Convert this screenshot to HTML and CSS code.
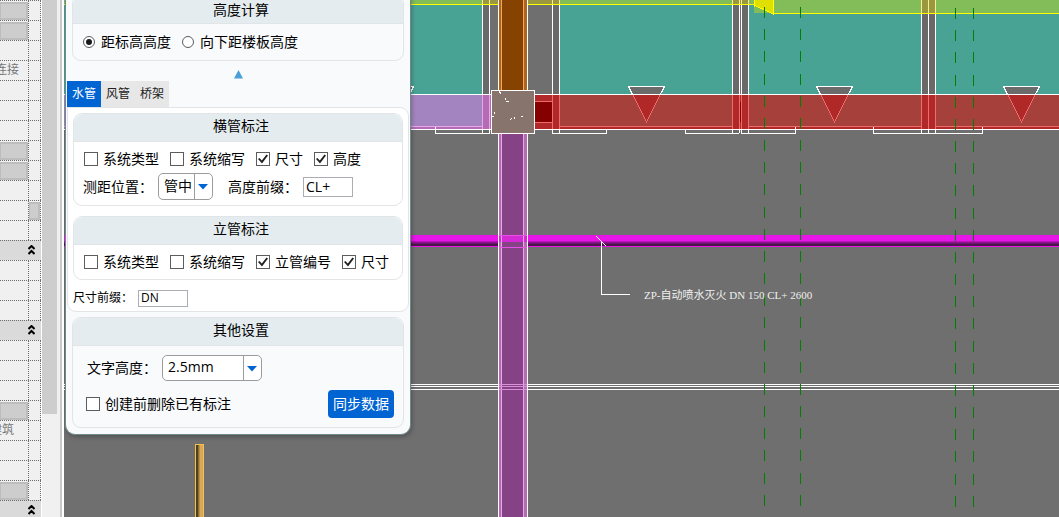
FILE: index.html
```html
<!DOCTYPE html>
<html lang="zh-CN">
<head>
<meta charset="utf-8">
<title>管道标注</title>
<link rel="stylesheet" href="styles.css">
</head>
<body>
<div class="app">
  <aside class="props">
    <div class="props-grid">
      <div class="prop"><div class="prop-value"><button class="prop-btn" type="button" aria-label="编辑"></button></div><div class="prop-link"></div></div>
      <div class="prop"><div class="prop-value"><button class="prop-btn" type="button" aria-label="编辑"></button></div><div class="prop-link"></div></div>
      <div class="prop"><div class="prop-value"></div><div class="prop-link"></div></div>
      <div class="prop"><div class="prop-value"><span class="prop-text">连接</span></div><div class="prop-link"></div></div>
      <div class="prop"><div class="prop-value"></div><div class="prop-link"></div></div>
      <div class="prop"><div class="prop-value"></div><div class="prop-link"></div></div>
      <div class="prop"><div class="prop-value"></div><div class="prop-link"></div></div>
      <div class="prop"><div class="prop-value"><button class="prop-btn" type="button" aria-label="编辑"></button></div><div class="prop-link"></div></div>
      <div class="prop"><div class="prop-value"><button class="prop-btn" type="button" aria-label="编辑"></button></div><div class="prop-link"></div></div>
      <div class="prop"><div class="prop-value"></div><div class="prop-link"></div></div>
      <div class="prop"><div class="prop-value"></div><div class="prop-link"><button class="prop-btn" type="button" aria-label="关联"></button></div></div>
      <div class="prop"><div class="prop-value"></div><div class="prop-link"></div></div>
      <button class="category" type="button" aria-label="折叠"><svg width="7" height="10" viewBox="0 0 7 10"><path d="M.5 4 3.5 1l3 3M.5 9l3-3 3 3"/></svg></button>
      <div class="prop"><div class="prop-value"></div><div class="prop-link"></div></div>
      <div class="prop"><div class="prop-value"></div><div class="prop-link"></div></div>
      <div class="prop"><div class="prop-value"></div><div class="prop-link"></div></div>
      <button class="category" type="button" aria-label="折叠"><svg width="7" height="10" viewBox="0 0 7 10"><path d="M.5 4 3.5 1l3 3M.5 9l3-3 3 3"/></svg></button>
      <div class="prop"><div class="prop-value"></div><div class="prop-link"></div></div>
      <div class="prop"><div class="prop-value"></div><div class="prop-link"></div></div>
      <div class="prop"><div class="prop-value"></div><div class="prop-link"></div></div>
      <div class="prop"><div class="prop-value"><button class="prop-btn" type="button" aria-label="编辑"></button></div><div class="prop-link"></div></div>
      <div class="prop"><div class="prop-value"><span class="prop-text prop-text-inset">建筑</span></div><div class="prop-link"></div></div>
      <div class="prop"><div class="prop-value"></div><div class="prop-link"></div></div>
      <div class="prop"><div class="prop-value"></div><div class="prop-link"></div></div>
      <div class="prop"><div class="prop-value"><button class="prop-btn" type="button" aria-label="编辑"></button></div><div class="prop-link"></div></div>
      <button class="category" type="button" aria-label="折叠"><svg width="7" height="10" viewBox="0 0 7 10"><path d="M.5 4 3.5 1l3 3M.5 9l3-3 3 3"/></svg></button>
    </div>
    <div class="scrollbar"><div class="thumb"></div></div>
    <div class="splitter"></div>
  </aside>

  <main class="workspace">
    <svg class="drawing" role="img" aria-label="管线平面图">
      <g transform="translate(-64 0)" shape-rendering="crispEdges">
        <!-- floor areas -->
        <path fill="#49a395" d="M64 0H482V94H64zM560 0H732V94H560zM749 0H921V94H749zM936 0H3000V94H936z"/>
        <path fill="#696969" d="M483 0H489V133H483zM553 0H559V133H553zM733 0H739V133H733zM742 0H748V133H742zM922 0H935V133H922z"/>
        <!-- top slab edge -->
        <path fill="#83bd5a" d="M64 0H754V4H64zM754 0H3000V13H754z"/>
        <path fill="#9a9740" d="M482 0H560V4H482zM732 0H749V4H732zM921 0H936V13H921z"/>
        <path class="yellow" d="M64 4.500H754M773 13.500H3000"/>
        <path fill="#e0e000" d="M754 0H773V14L754 5z"/>
        <path class="yellow" d="M754.500 0V7M773.500 0V15M754 5 773 14"/>
        <!-- column outlines -->
        <path class="white" d="M482.500 5V94M489.500 5V94M552.500 5V94M559.500 5V94M732.500 5V94M739.500 5V94M741.500 5V94M748.500 5V94M921.500 14V94M928.500 14V94M935.500 14V94"/>
        <path stroke="#f5f08c" d="M482.500 0V4M489.500 0V4M552.500 0V4M559.500 0V4M732.500 0V4M739.500 0V4M741.500 0V4M748.500 0V4M921.500 0V13M928.500 0V13M935.500 0V13"/>
        <!-- orange riser -->
        <path fill="#ad651d" d="M498 0H528V91H498z"/>
        <path fill="#854200" d="M502 0H523V91H502z"/>
        <path stroke="#f0a95e" d="M501.500 0V91M523.500 0V91"/>
        <path class="white" d="M498.500 0V91M527.500 0V91"/>
        <!-- door swings -->
        <path class="white" fill="#6b6b6b" d="M377.500 86.500H413.500L395.500 122zM628.500 86.500H664.500L646.500 122zM816.500 86.500H852.500L834.500 122zM1003.500 86.500H1039.500L1021.500 122z"/>
        <!-- horizontal beam -->
        <path fill="#a484c0" d="M64 95H491V127H64z"/>
        <path fill="#b56ab4" d="M64 127H491V129H64zM482 95H491V129H482z"/>
        <path fill="#a5403b" d="M535 95H3000V127H535z"/>
        <path fill="#b12829" d="M535 127H3000V129H535zM535 95H560V129H535zM732 95H749V129H732zM921 95H936V129H921z"/>
        <path fill="#850000" d="M535 102H552V122H535zM740 102H741V122H740z"/>
        <path fill="#b12829" stroke="#f06c6c" d="M633 95 646.500 122 660 95M821 95 834.500 122 848 95M1008 95 1021.500 122 1035 95"/>
        <path stroke="#f06c6c" d="M535 101.500H552M535 122.500H552M552.500 95V129M559.500 95V129M732.500 95V129M739.500 95V129M741.500 95V129M748.500 95V129M921.500 95V129M928.500 95V129M935.500 95V129M560 126.500H732M749 126.500H921M936 126.500H3000"/>
        <path stroke="#e8a8e8" d="M64 126.500H482M482.500 95V129M489.500 95V129"/>
        <path class="white" d="M64 94.500H3000M64 129.500H3000"/>
        <path class="white" d="M435.500 127V133.500H490M552 133.500H606.500V130M739 133.500H685.500V130M741 133.500H795.500V127M873.500 127V133.500H982.500V127M482.500 130V133M489.500 130V133M552.500 130V133M559.500 130V133M732.500 130V133M739.500 130V133M741.500 130V133M748.500 130V133M921.500 130V133M928.500 130V133M935.500 130V133"/>
        <!-- sprinkler main and wall lines -->
        <path fill="#e815e8" d="M64 235H3000V247H64z"/>
        <path fill="#b812b8" d="M64 241H3000V242H64z"/>
        <path fill="#8f138f" d="M64 242H3000V243H64z"/>
        <path fill="#6c156c" d="M64 243H3000V244H64z"/>
        <path fill="#4d154e" d="M64 244H3000V246H64z"/>
        <path class="white" d="M64 384.500H3000M64 386.500H3000M64 389.500H3000"/>
        <!-- purple riser -->
        <path fill="#b56ab4" d="M498 133H528V3000H498z"/>
        <path fill="#854285" d="M502 133H523V3000H502z"/>
        <path fill="#d42bd4" d="M499 235H527V242H499z"/>
        <path stroke="#e8a8e8" d="M501.500 133V3000M523.500 133V3000"/>
        <path stroke="#e850e8" d="M499 235.500H527M499 247.500H527"/>
        <path stroke="#d890d8" d="M499 384.500H527M499 386.500H527M499 389.500H527"/>
        <path class="white" d="M498.500 133V3000M527.500 133V3000"/>
        <!-- concrete column -->
        <path class="white" fill="#87746c" d="M491.500 90.500H534.500V133.500H491.500z"/>
        <path class="white" d="M499 91.500H500M499 92.500H501M500 93.500H501M505 98.500H506M505 99.500H506M506 101.500H509M494 112.500H495M494 113.500H495M492 116.500H494M510 119.500H511M511 118.500H512M514 117.500H515M514 118.500H515M521 116.500H523"/>
        <!-- axis lines -->
        <path stroke="#008000" stroke-dasharray="11 11.170" d="M764.500 7V506M800.500 7V506"/>
        <path stroke="#008000" stroke-dasharray="11 11.170" d="M955.500 8V507M973.500 8V507"/>
        <!-- wooden post -->
        <path fill="#f0c050" d="M195 444H204V3000H195z"/>
        <path fill="#504020" d="M196 445H198V3000H196z"/>
        <path fill="#8c7038" d="M198 445H199V3000H198z"/>
        <path fill="#b88f48" d="M199 445H200V3000H199z"/>
        <path fill="#d8aa58" d="M200 445H203V3000H200z"/>
        <!-- pipe tag -->
        <path class="white" d="M596.500 236.500 606.500 246.500M601.500 241V294.500H630"/>
        <text class="tag" x="644" y="299">ZP-自动喷水灭火 DN 150 CL+ 2600</text>
      </g>
    </svg>

    <form class="dialog">
      <fieldset class="group group-top">
        <h2 class="group-title">高度计算</h2>
        <div class="group-body">
          <div class="row">
            <label class="option"><input type="radio" name="base" checked>距标高高度</label>
            <label class="option"><input type="radio" name="base">向下距楼板高度</label>
          </div>
        </div>
      </fieldset>
      <button class="collapse" type="button" aria-label="收起"><svg width="9" height="9" viewBox="0 0 9 9"><path fill="#4a9fd8" d="M4.500 0 9 8.500H0z"/></svg></button>
      <div class="tabs" role="tablist">
        <button class="tab tab-active" type="button" role="tab" aria-selected="true">水管</button>
        <button class="tab" type="button" role="tab">风管</button>
        <button class="tab" type="button" role="tab">桥架</button>
      </div>
      <section class="tab-panel">
        <fieldset class="group">
          <h2 class="group-title">横管标注</h2>
          <div class="group-body group-body-double">
            <div class="row">
              <label class="option"><input type="checkbox">系统类型</label>
              <label class="option"><input type="checkbox">系统缩写</label>
              <label class="option"><input type="checkbox" checked>尺寸</label>
              <label class="option"><input type="checkbox" checked>高度</label>
            </div>
            <div class="row row-fields">
              <div class="field">
                <label for="measure">测距位置：</label>
                <span class="combo combo-small"><select id="measure"><option>管中</option></select><svg width="10" height="6" viewBox="0 0 10 6"><path fill="#0064d2" d="M0 0H10L5 5.500z"/></svg></span>
              </div>
              <div class="field">
                <label for="prefix">高度前缀：</label>
                <input class="text" id="prefix" type="text" value="CL+">
              </div>
            </div>
          </div>
        </fieldset>
        <fieldset class="group">
          <h2 class="group-title">立管标注</h2>
          <div class="group-body">
            <div class="row">
              <label class="option"><input type="checkbox">系统类型</label>
              <label class="option"><input type="checkbox">系统缩写</label>
              <label class="option"><input type="checkbox" checked>立管编号</label>
              <label class="option"><input type="checkbox" checked>尺寸</label>
            </div>
          </div>
        </fieldset>
        <div class="field field-compact">
          <label for="size-prefix">尺寸前缀：</label>
          <input class="text" id="size-prefix" type="text" value="DN">
        </div>
      </section>
      <fieldset class="group group-other">
        <h2 class="group-title">其他设置</h2>
        <div class="group-body group-body-wide">
          <div class="field">
            <label for="text-height">文字高度：</label>
            <span class="combo"><select id="text-height"><option>2.5mm</option></select><svg width="10" height="6" viewBox="0 0 10 6"><path fill="#0064d2" d="M0 0H10L5 5.500z"/></svg></span>
          </div>
          <div class="row row-actions">
            <label class="option"><input type="checkbox">创建前删除已有标注</label>
            <button class="sync" type="button">同步数据</button>
          </div>
        </div>
      </fieldset>
    </form>
  </main>
</div>
</body>
</html>
```
FILE: styles.css
```css
* { box-sizing: border-box; }

body {
  margin: 0;
  font: 14px/20px "Open Sans", "Noto Sans CJK SC", sans-serif;
  color: #000;
}

button, input, select { font: inherit; color: inherit; }

.app {
  display: flex;
  height: 100vh;
  overflow: hidden;
}

/* property palette */
.props {
  display: flex;
  flex: none;
  width: 64px;
  background: #f0f0f0;
  overflow: hidden;
}
.props-grid { width: 41px; }
.prop {
  display: flex;
  height: 20px;
  border-top: 1px dotted #6e6e6e;
}
.prop-value {
  display: flex;
  justify-content: flex-end;
  width: 29px;
  border-right: 1px dotted #6e6e6e;
}
.prop-link {
  flex: 1;
  border-right: 1px dotted #6e6e6e;
}
.prop-btn {
  display: block;
  width: 100%;
  height: 18px;
  margin-top: 1px;
  padding: 0;
  border: 2px solid #bdbdbd;
  border-left-width: 1px;
  background: #cdcdcd;
}
.prop-text {
  padding-right: 9px;
  font-size: 12px;
  line-height: 18px;
  color: #777;
  white-space: nowrap;
}
.prop-text-inset { padding-right: 14px; }
.category {
  display: flex;
  align-items: center;
  justify-content: flex-end;
  width: 100%;
  height: 20px;
  padding: 0 6px 2px 0;
  border: 0;
  border-top: 1px dotted #6e6e6e;
  background: #dadada;
}
.category path { fill: none; stroke: #000; stroke-width: 2; }
.scrollbar {
  width: 16px;
  border-left: 1px solid #fff;
}
.thumb { height: 80%; background: #cdcdcd; }
.splitter {
  flex: 1;
  margin-left: 3px;
  border-left: 2px solid #c8c8c8;
  background: #fff;
}

/* drawing */
.workspace {
  position: relative;
  flex: 1;
  background: #6f6f6f;
  overflow: hidden;
}
.drawing { display: block; width: 100%; height: 100%; }
.white { stroke: #fff; }
path.white:not([fill]), path.yellow { fill: none; }
.yellow { stroke: #ff0; }
.tag {
  font: 11px "Liberation Serif", "Noto Sans CJK SC", serif;
  fill: #f0f0f0;
}

/* dialog */
.dialog {
  position: absolute;
  top: -5px;
  left: 1px;
  width: 346px;
  padding: 0 1px 6px;
  border: 1px solid #6f8a8a;
  border-top: 0;
  border-radius: 0 0 10px 10px;
  background: #f8fafc;
  box-shadow: 1px 2px 4px #0004;
}
.group {
  min-width: 0;
  margin: 0 5px;
  padding: 0;
  border: 1px solid #e1e5e8;
  border-radius: 9px;
  overflow: hidden;
}
.group-title {
  height: 28px;
  margin: 0;
  padding: 2px 0 0 6px;
  border-bottom: 1px solid #e1e5e8;
  background: #e4ecef;
  font-size: 14px;
  font-weight: 400;
  text-align: center;
}
.group-top .group-title { padding-top: 4px; }
.group-top .option { gap: 6px; }
.group-body { padding: 8px 10px; }
.tab-panel .group-body { padding: 7px 10px; }
.tab-panel .group-body-double { padding: 7px 9px 5px 10px; }
.group-body-wide { padding: 9px 9px 9px 14px; }
.row { display: flex; align-items: center; gap: 11px; }
.row-fields { gap: 15px; margin: 4px 0 0 -1px; }
.row-actions { justify-content: space-between; margin: 9px 0 0 -1px; }
.option { display: flex; align-items: center; gap: 5px; white-space: nowrap; }
.field { display: flex; align-items: center; gap: 5px; white-space: nowrap; }

input[type="checkbox"], input[type="radio"] {
  display: grid;
  flex: none;
  place-items: center;
  appearance: none;
  width: 14px;
  height: 14px;
  margin: 0;
  border: 1px solid #5c5c5c;
  background: #fff;
}
input[type="radio"] { width: 12px; height: 12px; border-radius: 50%; }
input[type="radio"]:checked::before {
  content: "";
  width: 6px;
  height: 6px;
  border-radius: 50%;
  background: #1a1a1a;
}
input[type="checkbox"]:checked::before {
  content: "";
  width: 10px;
  height: 10px;
  background: #222;
  clip-path: polygon(0 50%, 15% 40%, 38% 65%, 85% 5%, 100% 15%, 40% 95%);
}

.collapse {
  display: flex;
  justify-content: center;
  width: 100%;
  height: 20px;
  padding: 9px 0 0;
  border: 0;
  background: none;
}
.tabs { display: flex; }
.tab {
  width: 34px;
  height: 26px;
  padding: 0;
  border: 0;
  background: #e7e7e7;
  font-size: 12px;
  color: #222;
}
.tab-active { background: #0064d2; color: #fff; }
.tab-panel {
  padding: 5px 0 3px;
  border: 1px solid #e1e5e8;
  border-radius: 0 9px 9px 9px;
  background: #fff;
}
.tab-panel .group + .group { margin-top: 10px; }
.text {
  width: 50px;
  height: 20px;
  padding: 0 2px;
  border: 1px solid #abadb3;
  background: #fff;
}
.field-compact { margin: 8px 5px 0; font-size: 12px; }
.field-compact .text { height: 17px; }

.combo {
  position: relative;
  display: flex;
  width: 100px;
  height: 26px;
  border: 1px solid #9c9c9c;
  border-radius: 5px;
  background: #fff;
}
.combo-small { width: 55px; height: 27px; }
.combo select {
  appearance: none;
  flex: 1;
  min-width: 0;
  margin-right: 17px;
  padding: 0 0 2px 5px;
  border: 0;
  border-right: 1px solid #9c9c9c;
  background: none;
}
.combo svg { position: absolute; right: 4px; top: 10px; pointer-events: none; }

.group-other { margin-top: 5px; }
.sync {
  width: 66px;
  height: 28px;
  padding: 0;
  border: 0;
  border-radius: 4px;
  background: #0064d2;
  color: #fff;
}
```
